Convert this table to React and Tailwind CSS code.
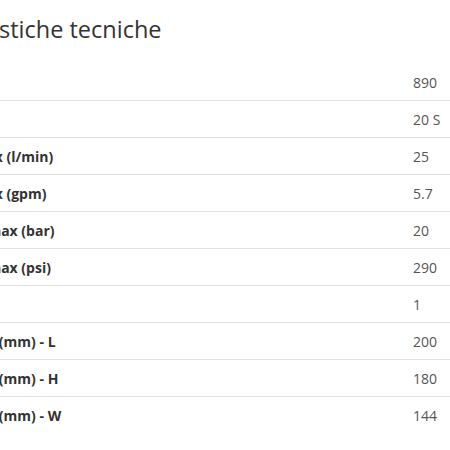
import React from "react";

const rows = [
  ["Giri/min", "890"],
  ["Pompa", "20 S"],
  ["Portata max (l/min)", "25"],
  ["Portata max (gpm)", "5.7"],
  ["Pressione max (bar)", "20"],
  ["Pressione max (psi)", "290"],
  ["Ugelli", "1"],
  ["Dimensioni (mm) - L", "200"],
  ["Dimensioni (mm) - H", "180"],
  ["Dimensioni (mm) - W", "144"],
];

export default function App() {
  return (
    <div
      className="w-[450px] h-[450px] overflow-hidden bg-white"
      style={{ fontFamily: "'Open Sans', 'Liberation Sans', sans-serif" }}
    >
      <div className="ml-[-97px] w-[700px]">
        <h2 className="pt-[13px] h-[64px] text-[23.5px] leading-[32px] font-normal text-[#333333]">
          Caratteristiche tecniche
        </h2>
      </div>
      <div className="ml-[-84px] w-[700px]">
        {rows.map(([label, value], i) => (
          <div
            key={i}
            className={`flex items-center h-[37px] text-[14px] ${
              i < rows.length - 1 ? "border-b border-[#e2e2e2]" : ""
            }`}
          >
            <div className="w-[497px] font-bold text-[#333333] whitespace-nowrap">
              {label}
            </div>
            <div className="text-[#555555]">{value}</div>
          </div>
        ))}
      </div>
    </div>
  );
}
